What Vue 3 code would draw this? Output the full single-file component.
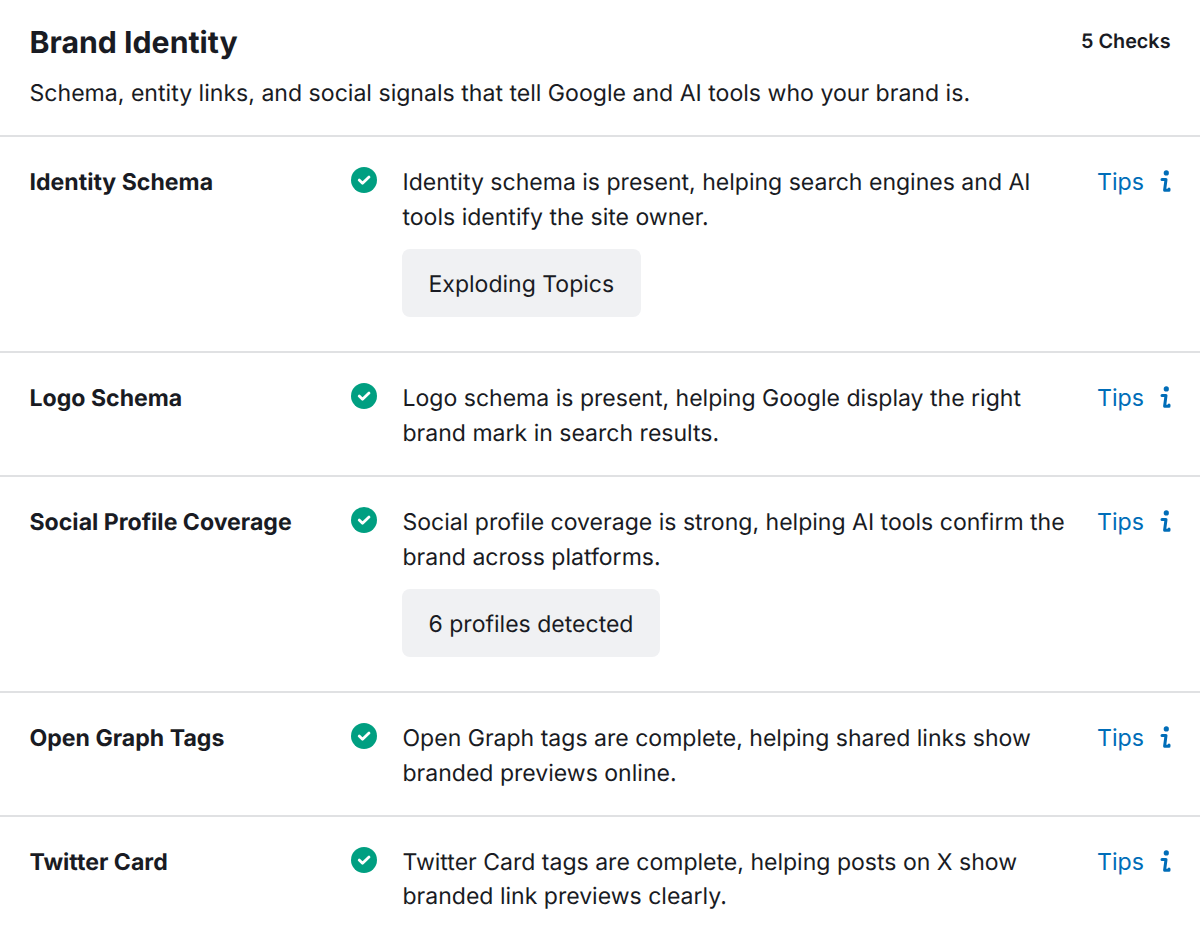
<template>
  <div class="brand-identity">
    <header class="header">
      <div class="header-top">
        <h2>Brand Identity</h2>
        <span class="check-count">{{ checks.length }} Checks</span>
      </div>
      <p>Schema, entity links, and social signals that tell Google and AI tools who your brand is.</p>
    </header>

    <div v-for="check in checks" :key="check.name" class="check-row">
      <h3>{{ check.name }}</h3>
      <svg class="status-icon" viewBox="0 0 26 26">
        <circle cx="13" cy="13" r="13" />
        <path d="M8.2 13.1l3.3 3.2 6.5-6.2" />
      </svg>
      <div class="check-body">
        <p>
          <span v-for="line in check.lines" :key="line" class="line">{{ line }}</span>
        </p>
        <div v-if="check.detail" class="detail">{{ check.detail }}</div>
      </div>
      <button class="tips-btn">
        Tips
        <svg class="info-icon" viewBox="0 0 12 24">
          <circle cx="6.3" cy="2.9" r="2.6" />
          <path d="M2 9.5h4L4.6 20.3h4.4v-1.2" />
        </svg>
      </button>
    </div>
  </div>
</template>

<script setup>
import { ref } from 'vue';

const checks = ref([
  {
    name: 'Identity Schema',
    lines: ['Identity schema is present, helping search engines and AI', 'tools identify the site owner.'],
    detail: 'Exploding Topics'
  },
  {
    name: 'Logo Schema',
    lines: ['Logo schema is present, helping Google display the right', 'brand mark in search results.']
  },
  {
    name: 'Social Profile Coverage',
    lines: ['Social profile coverage is strong, helping AI tools confirm the', 'brand across platforms.'],
    detail: '6 profiles detected'
  },
  {
    name: 'Open Graph Tags',
    lines: ['Open Graph tags are complete, helping shared links show', 'branded previews online.']
  },
  {
    name: 'Twitter Card',
    lines: ['Twitter Card tags are complete, helping posts on X show', 'branded link previews clearly.']
  }
]);
</script>

<style>
body {
  background: #fff;
  overflow: hidden;
}
</style>

<style scoped>
.brand-identity {
  font-family: Inter, 'Liberation Sans', sans-serif;
  color: #191b23;
  height: 934px;
  overflow: hidden;
  text-rendering: geometricPrecision;
  font-variant-ligatures: none;
  font-feature-settings: 'calt' 0, 'ccmp' 0;
}

h2,
h3,
p {
  margin: 0;
}

.header {
  height: 135px;
  box-sizing: border-box;
  padding: 24px 29.5px 0;
}

.header-top {
  display: flex;
  justify-content: space-between;
}

h2 {
  padding-top: 1px;
  font-size: 30.25px;
  line-height: 36px;
  font-weight: 700;
}

.check-count {
  font-size: 19.8px;
  line-height: 34px;
  font-weight: 600;
}

.header p {
  margin-top: 14.6px;
  font-size: 23.09px;
  line-height: 35px;
  white-space: nowrap;
}

.check-row {
  display: grid;
  grid-template-columns: 321.5px 51.5px 1fr auto;
  align-items: start;
  padding: 28px 28px 24.4px 29.5px;
  border-top: 2px solid #e0e1e3;
}

h3 {
  font-size: 23.1px;
  line-height: 34.65px;
  font-weight: 700;
}

.status-icon {
  width: 26px;
  height: 26px;
  margin-top: 2px;
}

.status-icon circle {
  fill: #009f81;
}

.status-icon path {
  fill: none;
  stroke: #fff;
  stroke-width: 2.8;
  stroke-linecap: round;
  stroke-linejoin: round;
}

.check-body {
  font-size: 23.04px;
  line-height: 34.65px;
}

.line {
  display: block;
  white-space: nowrap;
}

.detail {
  width: fit-content;
  margin: 15px 0 9.8px -0.6px;
  padding: 17.5px 26.6px 15.5px;
  border-radius: 8px;
  background: #f0f1f3;
}

.tips-btn {
  display: flex;
  align-items: center;
  gap: 16px;
  padding: 0;
  border: none;
  background: none;
  color: #006db8;
  font: inherit;
  font-size: 23.2px;
  line-height: 34.65px;
  cursor: pointer;
}

.info-icon {
  width: 12px;
  height: 24px;
  fill: currentColor;
}

.info-icon path {
  fill: none;
  stroke: currentColor;
  stroke-width: 3;
  stroke-linecap: round;
  stroke-linejoin: round;
}
</style>
